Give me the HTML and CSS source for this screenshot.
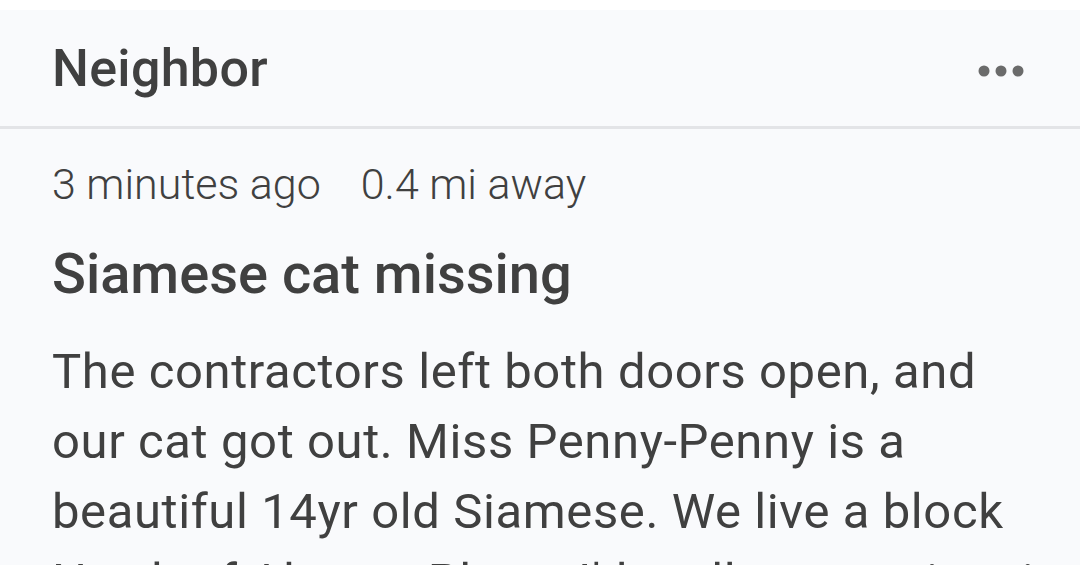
FILE: index.html
```html
<!DOCTYPE html>
<html lang="en">
<head>
  <meta charset="UTF-8" />
  <meta name="viewport" content="width=device-width, initial-scale=1.0"/>
  <title>Neighbor post</title>
  <link rel="stylesheet" href="styles.css">
</head>
<body>

<div class="post">
  <header class="post-header">
    <h2>Neighbor</h2>
    <button class="more" aria-label="More options">
      <svg width="46" height="12" viewBox="0 0 46 12">
        <circle cx="6" cy="6" r="5.5" />
        <circle cx="23" cy="6" r="5.5" />
        <circle cx="40" cy="6" r="5.5" />
      </svg>
    </button>
  </header>

  <div class="post-body">
    <p class="meta">
      <span>3 minutes ago</span>
      <span>0.4 mi away</span>
    </p>
    <h3>Siamese cat missing</h3>
    <p class="text">
      The contractors left both doors open, and<br>
      our cat got out. Miss Penny-Penny is a<br>
      beautiful 14yr old Siamese. We live a block<br>
      North of Alvarez Place. I'd really appreciate it.
    </p>
  </div>
</div>

</body>
</html>
```

FILE: styles.css
```css
body {
  font-family: 'Roboto', sans-serif;
  background-color: #ffffff;
  color: #404040;
  margin: 0;
  padding: 10px 0 0;
  overflow: hidden;
}
.post {
  background-color: #f9fafc;
  min-height: 600px;
}
.post-header {
  height: 116px;
  padding: 0 52px;
  display: flex;
  justify-content: space-between;
  align-items: center;
  border-bottom: 3px solid #e3e4e7;
}
.post-header h2 {
  margin: 0;
  font-size: 52px;
  font-weight: 500;
  letter-spacing: 0.3px;
}
.more {
  border: none;
  background: none;
  padding: 0;
  margin-right: 4px;
  margin-top: 6px;
  display: flex;
}
.more svg {
  fill: #6b6b6b;
}
.post-body {
  padding: 30px 52px 0;
}
.meta {
  margin: 0;
  font-size: 43px;
  font-weight: 300;
  display: flex;
  gap: 40px;
}
h3 {
  margin: 32px 0 0;
  font-size: 56px;
  font-weight: 500;
}
.text {
  margin: 30px 0 0;
  font-size: 49px;
  line-height: 70px;
  font-weight: 400;
  letter-spacing: 0.6px;
  white-space: nowrap;
}
```
